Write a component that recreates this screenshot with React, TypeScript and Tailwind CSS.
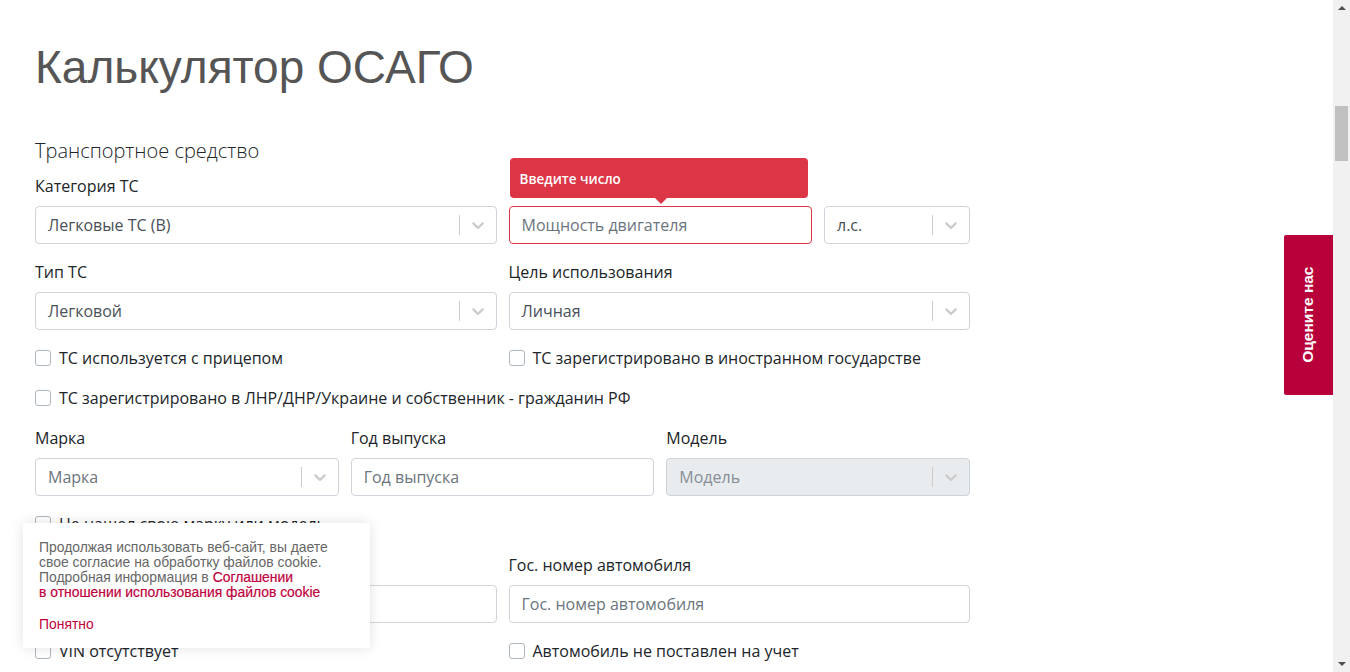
import React from "react";

const OS = { fontFamily: '"Open Sans", "Liberation Sans", sans-serif' };
const AR = { fontFamily: '"Liberation Sans", Arial, sans-serif' };

function Chevron() {
  return (
    <svg width="20" height="20" viewBox="0 0 20 20" fill="#cccccc">
      <path d="M4.516 7.548c0.436-0.446 1.043-0.481 1.576 0l3.908 3.747 3.908-3.747c0.533-0.481 1.141-0.446 1.574 0 0.436 0.445 0.408 1.197 0 1.615-0.406 0.418-4.695 4.502-4.695 4.502-0.217 0.223-0.502 0.335-0.787 0.335s-0.57-0.112-0.789-0.335c0 0-4.287-4.084-4.695-4.502s-0.436-1.170 0-1.615z" />
    </svg>
  );
}

function Select({ value, placeholder, disabled, className = "" }: { value?: string; placeholder?: string; disabled?: boolean; className?: string }) {
  return (
    <div
      className={`flex h-[38px] items-center rounded-[4px] border border-[#ced4da] ${disabled ? "bg-[#e9ecef]" : "bg-white"} ${className}`}
    >
      <div className={`flex-1 truncate pl-3 text-[16px] ${value ? "text-[#495057]" : disabled ? "text-[#868e96]" : "text-[#6c757d]"}`} style={OS}>
        {value ?? placeholder}
      </div>
      <div className="h-5 w-px bg-[#cccccc]" />
      <div className="flex w-9 items-center justify-center">
        <Chevron />
      </div>
    </div>
  );
}

function Input({ placeholder, invalid, className = "" }: { placeholder: string; invalid?: boolean; className?: string }) {
  return (
    <div
      className={`flex h-[38px] items-center rounded-[4px] border bg-white pl-3 ${invalid ? "border-[#dc3545]" : "border-[#ced4da]"} ${className}`}
    >
      <span className="text-[16px] text-[#6c757d]" style={OS}>{placeholder}</span>
    </div>
  );
}

function Label({ children }: { children: React.ReactNode }) {
  return (
    <div className="mb-2 h-6 text-[16px] leading-6 text-[#212529]" style={OS}>
      {children}
    </div>
  );
}

function Check({ children }: { children: React.ReactNode }) {
  return (
    <div className="flex h-6 items-center gap-2">
      <div className="h-4 w-4 rounded-[3px] border border-[#adb5bd] bg-white" />
      <span className="text-[16px] leading-6 text-[#212529]" style={OS}>{children}</span>
    </div>
  );
}

export default function App() {
  return (
    <div className="flex h-[672px] w-full overflow-hidden bg-white">
      <div className="relative flex-1">
        <div className="w-[935px] pl-[35px] box-content">
          <h1 className="pt-[35px] text-[46px] leading-[64px] text-[#555555]" style={AR}>
            Калькулятор ОСАГО
          </h1>
          <div className="mt-[38px] text-[20px] font-light leading-7 text-[#212529]" style={OS}>
            Транспортное средство
          </div>
          <div className="mt-[9px] flex flex-col">
            <div className="grid grid-cols-2 gap-x-3">
              <div>
                <Label>Категория ТС</Label>
                <Select value="Легковые ТС (B)" />
              </div>
              <div>
                <div className="mb-2 h-6" />
                <div className="flex gap-3">
                  <div className="relative flex-1">
                    <div className="absolute bottom-[46px] left-[1px] right-[4px] flex h-[40px] items-center rounded-[4px] bg-[#dc3545] px-[10px]">
                      <span className="pt-[2px] text-[13.5px] font-semibold text-white" style={OS}>Введите число</span>
                      <div className="absolute -bottom-[6px] left-[145px] h-0 w-0 border-x-[6px] border-t-[6px] border-x-transparent border-t-[#dc3545]" />
                    </div>
                    <Input placeholder="Мощность двигателя" invalid />
                  </div>
                  <Select value="л.с." className="w-[146px]" />
                </div>
              </div>
            </div>

            <div className="mt-4 grid grid-cols-2 gap-x-3">
              <div>
                <Label>Тип ТС</Label>
                <Select value="Легковой" />
              </div>
              <div>
                <Label>Цель использования</Label>
                <Select value="Личная" />
              </div>
            </div>

            <div className="mt-4 grid grid-cols-2 gap-x-3">
              <Check>ТС используется с прицепом</Check>
              <Check>ТС зарегистрировано в иностранном государстве</Check>
            </div>
            <div className="mt-4">
              <Check>ТС зарегистрировано в ЛНР/ДНР/Украине и собственник - гражданин РФ</Check>
            </div>

            <div className="mt-4 grid grid-cols-3 gap-x-3">
              <div>
                <Label>Марка</Label>
                <Select placeholder="Марка" />
              </div>
              <div>
                <Label>Год выпуска</Label>
                <Input placeholder="Год выпуска" />
              </div>
              <div>
                <Label>Модель</Label>
                <Select placeholder="Модель" disabled />
              </div>
            </div>

            <div className="mt-4">
              <Check>Не нашел свою марку или модель</Check>
            </div>

            <div className="mt-[17px] grid grid-cols-2 gap-x-3">
              <div>
                <Label>VIN</Label>
                <Input placeholder="VIN" />
              </div>
              <div>
                <Label>Гос. номер автомобиля</Label>
                <Input placeholder="Гос. номер автомобиля" />
              </div>
            </div>

            <div className="mt-4 grid grid-cols-2 gap-x-3">
              <Check>VIN отсутствует</Check>
              <Check>Автомобиль не поставлен на учет</Check>
            </div>
          </div>
        </div>

        {/* Cookie popup */}
        <div className="absolute left-[23px] top-[523px] h-[125px] w-[347px] bg-white px-4 pt-[17px] shadow-[0_0_12px_rgba(0,0,0,0.12)]" style={AR}>
          <p className="text-[13.9px] leading-[15px] text-[#666666]">
            Продолжая использовать веб-сайт, вы даете
            <br />
            свое согласие на обработку файлов cookie.
            <br />
            Подробная информация в <span className="text-[#c0003c] [-webkit-text-stroke:0.2px_#c0003c]">Соглашении</span>
            <br />
            <span className="text-[#c0003c] [-webkit-text-stroke:0.2px_#c0003c]">в отношении использования файлов cookie</span>
          </p>
          <div className="mt-[17px] text-[13.9px] leading-[15px] text-[#c0003c]">Понятно</div>
        </div>

        {/* Rate us tab */}
        <div className="absolute right-0 top-[235px] flex h-[160px] w-[49px] items-center justify-center rounded-l-[2px] bg-[#b8003a]">
          <span className="-rotate-90 whitespace-nowrap text-[15.5px] font-bold text-white" style={AR}>
            Оцените нас
          </span>
        </div>
      </div>

      {/* Scrollbar */}
      <div className="relative flex w-[17px] flex-col items-center bg-[#f1f1f1]">
        <div className="mt-[6px] h-0 w-0 border-x-[4px] border-b-[4px] border-x-transparent border-b-[#505050]" />
        <div className="absolute left-[2px] top-[106px] h-[55px] w-[13px] bg-[#c1c1c1]" />
        <div className="absolute bottom-[6px] h-0 w-0 border-x-[4px] border-t-[4px] border-x-transparent border-t-[#505050]" />
      </div>
    </div>
  );
}
